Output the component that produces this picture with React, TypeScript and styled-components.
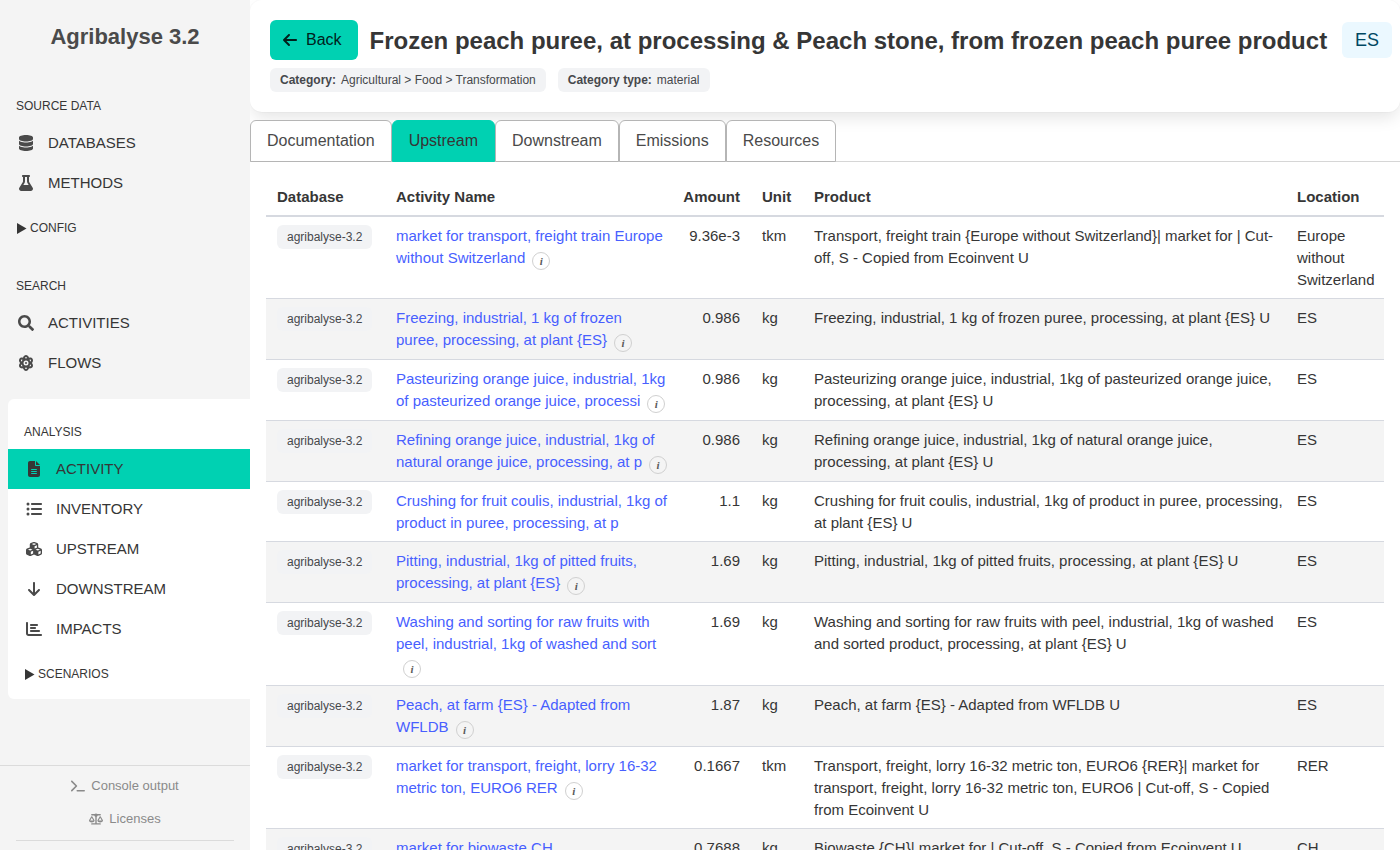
import React from "react";
import styled, { createGlobalStyle, css } from "styled-components";
import type { IconType } from "react-icons";
import { FaSearch } from "react-icons/fa";
import {
  FaArrowDown,
  FaArrowLeft,
  FaAtom,
  FaChartBar,
  FaCubes,
  FaDatabase,
  FaFileLines,
  FaFlask,
  FaListUl,
  FaScaleBalanced,
  FaTerminal,
} from "react-icons/fa6";

const color = {
  primary: "#00d1b2",
  page: "#ffffff",
  panel: "#f4f4f4",
  text: "#363636",
  icon: "#4a4a4a",
  muted: "#8a8a8a",
  link: "#485fff",
  tag: "#f2f3f5",
  line: "#d6d9e0",
};

const GlobalStyle = createGlobalStyle`
  *, *::before, *::after { box-sizing: border-box; }
  html {
    overflow: hidden;
    text-rendering: optimizeLegibility;
  }
  body {
    margin: 0;
    background: ${color.page};
    color: ${color.text};
    font-family: "Liberation Sans", Arial, sans-serif;
    font-size: 16px;
    line-height: 24px;
  }
  a { text-decoration: none; }
`;

const Layout = styled.div`
  display: grid;
  grid-template-columns: 250px minmax(0, 1fr);
  height: 100vh;
  overflow: hidden;
`;

/* Sidebar */

const Sidebar = styled.aside`
  display: flex;
  flex-direction: column;
  min-height: 0;
  background: ${color.panel};
`;

const Brand = styled.h1`
  margin: 22px 0 36px;
  color: ${color.icon};
  font-size: 22px;
  line-height: 30px;
  text-align: center;
`;

const Section = styled.section<{ $raised?: boolean }>`
  display: flex;
  flex-direction: column;
  padding-bottom: 17px;
  ${({ $raised }) =>
    $raised &&
    css`
      margin: -1px 0 0 8px;
      padding: 15px 0 2px;
      background: ${color.page};
      border-radius: 6px 0 0 6px;
    `}
`;

const SectionTitle = styled.h2`
  margin: 0;
  padding: 10px 16px 8px;
  font-size: 12px;
  font-weight: 400;
  line-height: 17px;
  text-transform: uppercase;
`;

const NavLink = styled.a<{ $active?: boolean }>`
  display: flex;
  align-items: center;
  gap: 12px;
  height: 40px;
  padding: 0 16px;
  color: ${color.text};
  font-size: 15px;
  line-height: 22px;
  text-transform: uppercase;
  ${({ $active }) => $active && css`background: ${color.primary};`}

  svg {
    flex: none;
    width: auto;
    height: 16px;
    color: ${({ $active }) => ($active ? color.text : color.icon)};
  }
`;

const IconSlot = styled.span`
  display: flex;
  justify-content: center;
  width: 20px;
  font-size: 16px;
`;

const Toggle = styled.button`
  display: flex;
  align-items: center;
  gap: 3px;
  height: 48px;
  padding: 2px 16px 0;
  border: 0;
  background: none;
  color: ${color.text};
  font: inherit;
  font-size: 12px;
  line-height: 18px;
  text-transform: uppercase;
`;

const SidebarFooter = styled.footer`
  display: flex;
  flex-direction: column;
  align-items: center;
  height: 85px;
  margin-top: auto;
  padding: 3px 16px 0;
  border-top: 1px solid #dbdbdb;
  overflow: hidden;
`;

const FooterLink = styled.a`
  display: flex;
  align-items: center;
  gap: 6px;
  height: 33px;
  flex: none;
  color: ${color.muted};
  font-size: 13px;
  line-height: 20px;
`;

const FooterRule = styled.hr`
  align-self: stretch;
  width: 100%;
  margin: 5px 0 0;
  border: 0;
  border-top: 1px solid #dbdbdb;
`;

/* Main column */

const Main = styled.main`
  min-width: 0;
  overflow: hidden;
`;

const Header = styled.header`
  display: flex;
  flex-direction: column;
  gap: 8px;
  padding: 20px 8px 20px 20px;
  border-radius: 12px;
  box-shadow: 0 8px 16px -2px rgba(10, 10, 10, 0.1), 0 0 0 1px rgba(10, 10, 10, 0.02);
`;

const TitleRow = styled.div`
  display: flex;
  align-items: center;
  gap: 12px;
`;

const BackButton = styled.button`
  display: flex;
  align-items: center;
  gap: 8px;
  flex: none;
  height: 40px;
  padding: 0 16px 0 12px;
  border: 0;
  border-radius: 6px;
  background: ${color.primary};
  color: #00211c;
  font: inherit;
`;

const PageTitle = styled.h2`
  flex: 1;
  margin: 0;
  padding-top: 2px;
  font-size: 24px;
  line-height: 28px;
  white-space: nowrap;
`;

const CountryTag = styled.span`
  flex: none;
  padding: 6px 13px;
  border-radius: 6px;
  background: #ebf8ff;
  color: #004863;
  font-size: 18px;
  line-height: 24px;
`;

const TagRow = styled.div`
  display: flex;
  gap: 12px;
`;

const Tag = styled.span`
  display: inline-flex;
  align-items: center;
  gap: 5px;
  height: 24px;
  padding: 0 10px;
  border-radius: 6px;
  background: ${color.tag};
  color: #46484c;
  font-size: 12px;
  line-height: 18px;
  white-space: nowrap;
`;

const Tabs = styled.nav`
  display: flex;
  margin-top: 8px;
  border-bottom: 1px solid #d6d6d6;
`;

const Tab = styled.a<{ $active?: boolean }>`
  margin-bottom: -1px;
  padding: 8px 16px;
  border: 1px solid #b5b5b5;
  border-radius: 6px 6px 0 0;
  background: ${color.page};
  color: ${color.icon};
  ${({ $active }) =>
    $active &&
    css`
      border-color: ${color.primary};
      background: ${color.primary};
      color: ${color.text};
    `}
`;

const TableArea = styled.div`
  padding: 16px;
`;

const Table = styled.table`
  width: 100%;
  border-collapse: separate;
  border-spacing: 0;
  table-layout: fixed;
  font-size: 15px;
  line-height: 22px;

  tbody tr:nth-child(even) {
    background: ${color.panel};
  }
`;

const Col = styled.col<{ $width?: number }>`
  ${({ $width }) => $width && css`width: ${$width}px;`}
`;

const cellBox = css<{ $right?: boolean }>`
  padding: ${({ $right }) => ($right ? "8px 11px 7px 0" : "8px 0 7px 11px")};
  text-align: ${({ $right }) => ($right ? "right" : "left")};
`;

const HeadCell = styled.th<{ $right?: boolean }>`
  ${cellBox}
  border-bottom: 2px solid ${color.line};
`;

const Cell = styled.td<{ $right?: boolean }>`
  ${cellBox}
  border-bottom: 1px solid ${color.line};
  vertical-align: top;
`;

const ActivityLink = styled.a`
  color: ${color.link};
`;

const Info = styled.button`
  display: inline-block;
  width: 18px;
  height: 18px;
  margin-left: 7px;
  padding: 0;
  border: 1px solid #d0d0d0;
  border-radius: 50%;
  background: transparent;
  color: #5a5a5a;
  font: italic bold 11px/16px "Liberation Serif", "Times New Roman", serif;
  text-align: center;
  vertical-align: -2px;
`;

type NavItem = { label: string; icon: IconType; active?: boolean };

const sourceItems: NavItem[] = [
  { label: "Databases", icon: FaDatabase },
  { label: "Methods", icon: FaFlask },
];
const searchItems: NavItem[] = [
  { label: "Activities", icon: FaSearch },
  { label: "Flows", icon: FaAtom },
];
const analysisItems: NavItem[] = [
  { label: "Activity", icon: FaFileLines, active: true },
  { label: "Inventory", icon: FaListUl },
  { label: "Upstream", icon: FaCubes },
  { label: "Downstream", icon: FaArrowDown },
  { label: "Impacts", icon: FaChartBar },
];

const tabs = ["Documentation", "Upstream", "Downstream", "Emissions", "Resources"];

type Exchange = {
  name: string;
  amount: string;
  unit: string;
  product: string;
  location: string;
  info: boolean;
};

const exchanges: Exchange[] = [
  { name: "market for transport, freight train Europe without Switzerland", amount: "9.36e-3", unit: "tkm", product: "Transport, freight train {Europe without Switzerland}| market for | Cut-off, S - Copied from Ecoinvent U", location: "Europe without Switzerland", info: true },
  { name: "Freezing, industrial, 1 kg of frozen puree, processing, at plant {ES}", amount: "0.986", unit: "kg", product: "Freezing, industrial, 1 kg of frozen puree, processing, at plant {ES} U", location: "ES", info: true },
  { name: "Pasteurizing orange juice, industrial, 1kg of pasteurized orange juice, processi", amount: "0.986", unit: "kg", product: "Pasteurizing orange juice, industrial, 1kg of pasteurized orange juice, processing, at plant {ES} U", location: "ES", info: true },
  { name: "Refining orange juice, industrial, 1kg of natural orange juice, processing, at p", amount: "0.986", unit: "kg", product: "Refining orange juice, industrial, 1kg of natural orange juice, processing, at plant {ES} U", location: "ES", info: true },
  { name: "Crushing for fruit coulis, industrial, 1kg of product in puree, processing, at p", amount: "1.1", unit: "kg", product: "Crushing for fruit coulis, industrial, 1kg of product in puree, processing, at plant {ES} U", location: "ES", info: false },
  { name: "Pitting, industrial, 1kg of pitted fruits, processing, at plant {ES}", amount: "1.69", unit: "kg", product: "Pitting, industrial, 1kg of pitted fruits, processing, at plant {ES} U", location: "ES", info: true },
  { name: "Washing and sorting for raw fruits with peel, industrial, 1kg of washed and sort", amount: "1.69", unit: "kg", product: "Washing and sorting for raw fruits with peel, industrial, 1kg of washed and sorted product, processing, at plant {ES} U", location: "ES", info: true },
  { name: "Peach, at farm {ES} - Adapted from WFLDB", amount: "1.87", unit: "kg", product: "Peach, at farm {ES} - Adapted from WFLDB U", location: "ES", info: true },
  { name: "market for transport, freight, lorry 16-32 metric ton, EURO6 RER", amount: "0.1667", unit: "tkm", product: "Transport, freight, lorry 16-32 metric ton, EURO6 {RER}| market for transport, freight, lorry 16-32 metric ton, EURO6 | Cut-off, S - Copied from Ecoinvent U", location: "RER", info: true },
  { name: "market for biowaste CH", amount: "0.7688", unit: "kg", product: "Biowaste {CH}| market for | Cut-off, S - Copied from Ecoinvent U", location: "CH", info: false },
];

function NavList({ items }: { items: NavItem[] }) {
  return (
    <>
      {items.map(({ label, icon: Icon, active }) => (
        <NavLink key={label} href="#" $active={active}>
          <IconSlot>
            <Icon />
          </IconSlot>
          {label}
        </NavLink>
      ))}
    </>
  );
}

function Disclosure({ label }: { label: string }) {
  return (
    <Toggle type="button" aria-expanded={false}>
      <svg width="11" height="12" viewBox="0 0 11 12" aria-hidden="true">
        <path d="M1 1v11l9.500-5.500z" fill="currentColor" />
      </svg>
      {label}
    </Toggle>
  );
}

export default function App() {
  return (
    <>
      <GlobalStyle />
      <Layout>
        <Sidebar>
          <Brand>Agribalyse 3.2</Brand>
          <Section>
            <SectionTitle>Source data</SectionTitle>
            <NavList items={sourceItems} />
            <Disclosure label="Config" />
          </Section>
          <Section>
            <SectionTitle>Search</SectionTitle>
            <NavList items={searchItems} />
          </Section>
          <Section $raised>
            <SectionTitle>Analysis</SectionTitle>
            <NavList items={analysisItems} />
            <Disclosure label="Scenarios" />
          </Section>
          <SidebarFooter>
            <FooterLink href="#">
              <FaTerminal size={14} />
              Console output
            </FooterLink>
            <FooterLink href="#">
              <FaScaleBalanced size={14} />
              Licenses
            </FooterLink>
            <FooterRule />
          </SidebarFooter>
        </Sidebar>
        <Main>
          <Header>
            <TitleRow>
              <BackButton type="button">
                <FaArrowLeft />
                Back
              </BackButton>
              <PageTitle>
                Frozen peach puree, at processing &amp; Peach stone, from frozen peach puree product
              </PageTitle>
              <CountryTag>ES</CountryTag>
            </TitleRow>
            <TagRow>
              <Tag>
                <strong>Category:</strong>
                Agricultural &gt; Food &gt; Transformation
              </Tag>
              <Tag>
                <strong>Category type:</strong>
                material
              </Tag>
            </TagRow>
          </Header>
          <Tabs>
            {tabs.map((tab) => (
              <Tab key={tab} href="#" $active={tab === "Upstream"}>
                {tab}
              </Tab>
            ))}
          </Tabs>
          <TableArea>
            <Table>
              <colgroup>
                <Col $width={119} />
                <Col $width={283} />
                <Col $width={83} />
                <Col $width={52} />
                <Col />
                <Col $width={98} />
              </colgroup>
              <thead>
                <tr>
                  <HeadCell>Database</HeadCell>
                  <HeadCell>Activity Name</HeadCell>
                  <HeadCell $right>Amount</HeadCell>
                  <HeadCell>Unit</HeadCell>
                  <HeadCell>Product</HeadCell>
                  <HeadCell>Location</HeadCell>
                </tr>
              </thead>
              <tbody>
                {exchanges.map((row) => (
                  <tr key={row.name}>
                    <Cell>
                      <Tag>agribalyse-3.2</Tag>
                    </Cell>
                    <Cell>
                      <ActivityLink href="#">{row.name}</ActivityLink>
                      {row.info && (
                        <Info type="button" aria-label={`About ${row.name}`}>
                          i
                        </Info>
                      )}
                    </Cell>
                    <Cell $right>{row.amount}</Cell>
                    <Cell>{row.unit}</Cell>
                    <Cell>{row.product}</Cell>
                    <Cell>{row.location}</Cell>
                  </tr>
                ))}
              </tbody>
            </Table>
          </TableArea>
        </Main>
      </Layout>
    </>
  );
}
